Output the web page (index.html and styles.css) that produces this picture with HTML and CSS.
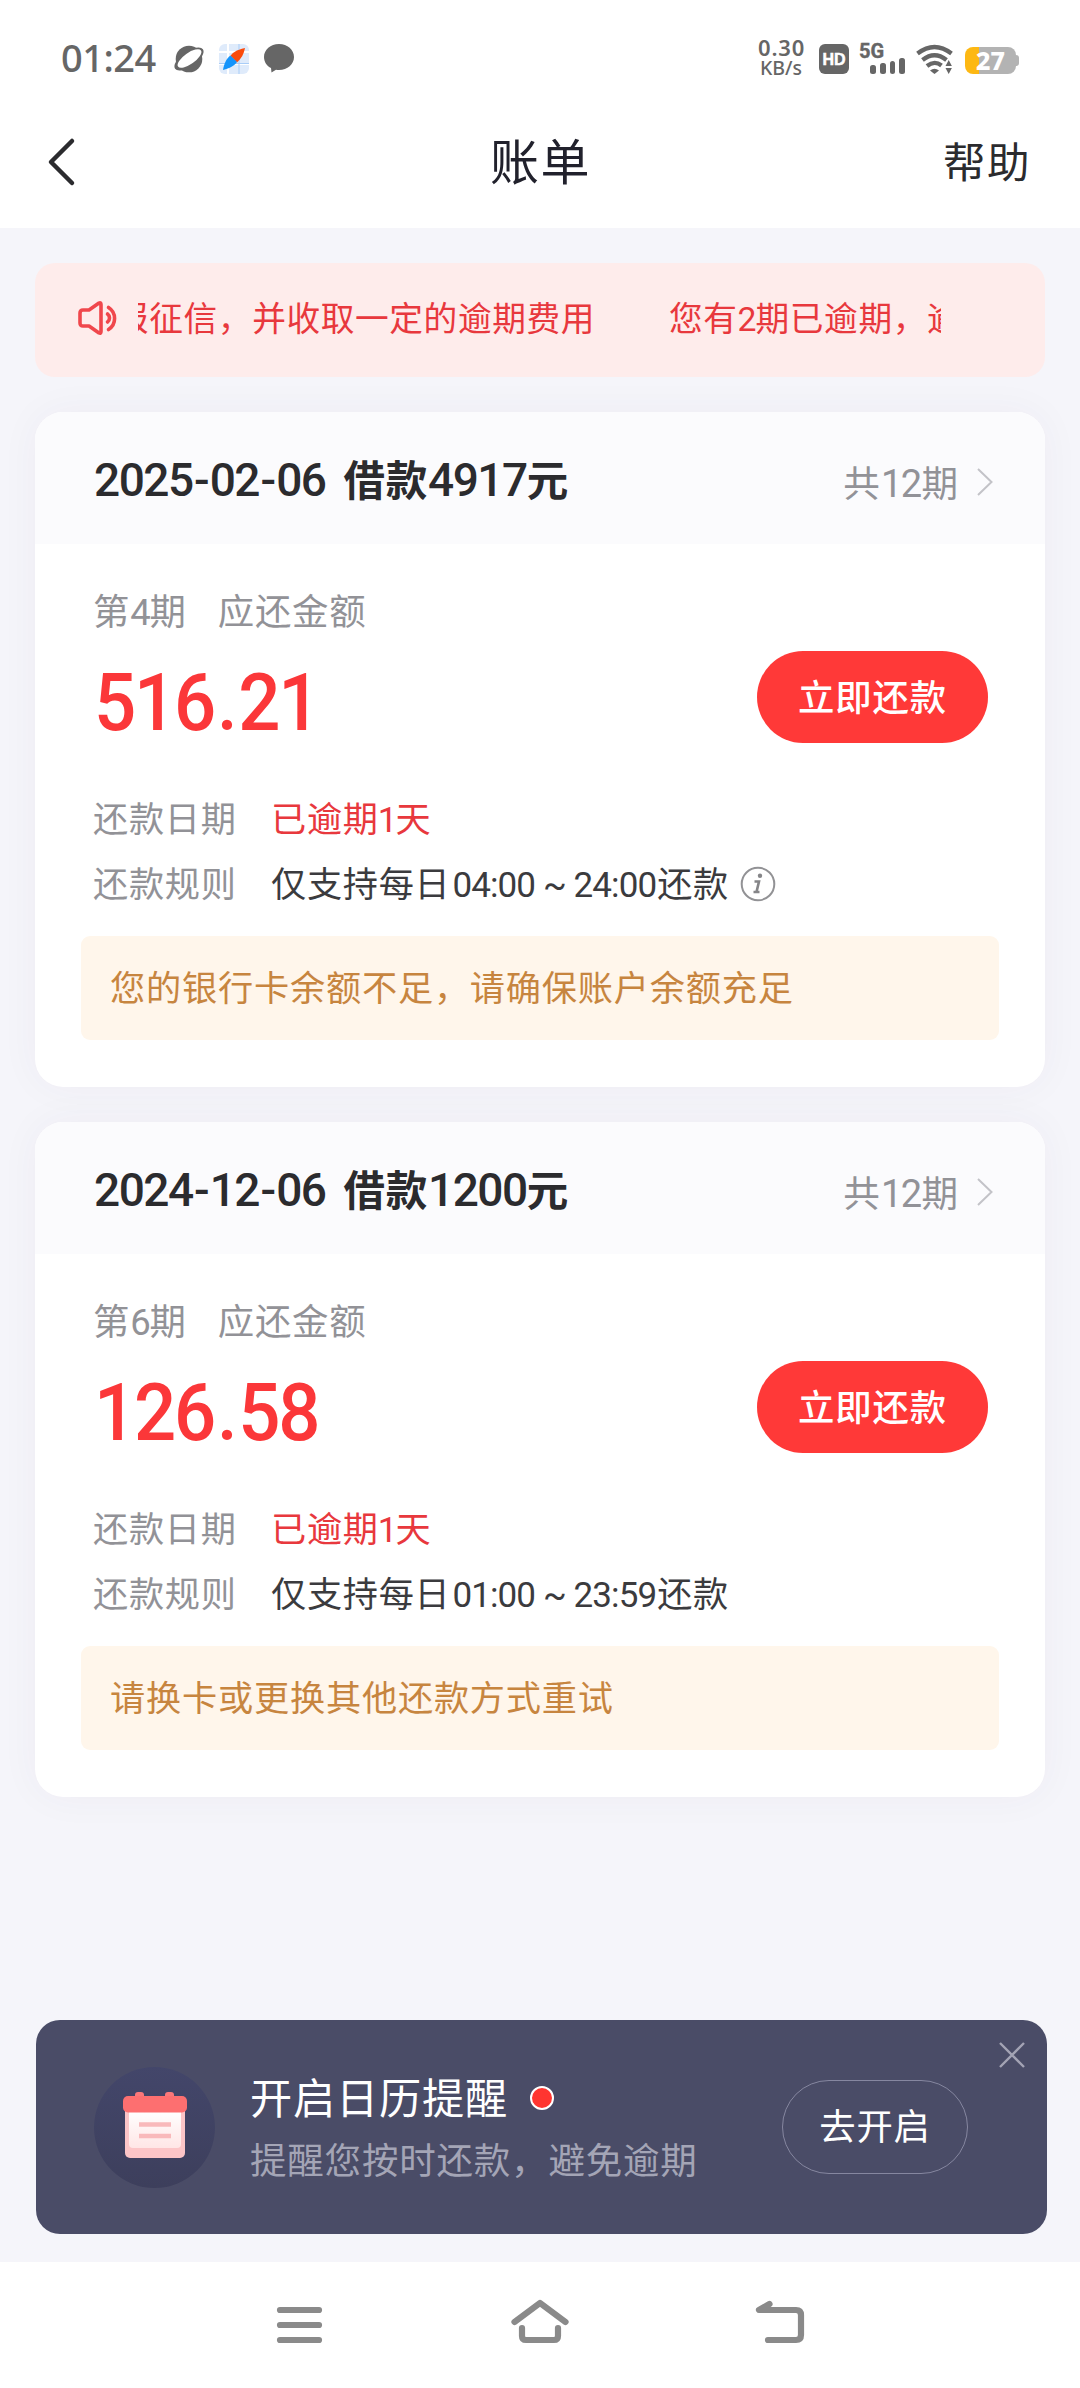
FILE: index.html
```html
<!DOCTYPE html>
<html lang="zh-CN">
<head>
<meta charset="utf-8">
<title>账单</title>
<link rel="stylesheet" href="styles.css">
</head>
<body>
<div class="status">
  <span class="time">01:24</span>
  <svg class="s-ico" width="30" height="30" viewBox="0 0 30 30"><circle cx="15" cy="15" r="13.300" fill="#666"/><ellipse cx="15" cy="15" rx="17" ry="7.500" transform="rotate(-35 15 15)" fill="#666"/><ellipse cx="15.500" cy="14.500" rx="14" ry="5.600" transform="rotate(-35 15.500 14.500)" fill="#fff"/></svg>
  <svg class="s-ico" width="30" height="30" viewBox="0 0 30 30"><rect width="30" height="30" rx="6" fill="#dfebfb"/><path d="M9 0v30M0 8h30M0 20h30" stroke="#fff" stroke-width="2"/><path d="M20 0v30M0 19.500h30" stroke="#a9cdf7" stroke-width="1"/><path d="M26 4C17 6 13 9 11.500 12l6.500 6.500C22 15 25 10 26 4Z" fill="#fa4b0c"/><path d="M4 26C5 19 8 14 11.500 11.500l6.500 6.500C15 22 11 24 4 26Z" fill="#1494fb"/></svg>
  <svg class="s-ico" width="30" height="30" viewBox="0 0 30 30"><path d="M15 0c8.500 0 15 5.700 15 13s-6.500 13-15 13c-1 0-2 0-3-.3L7.500 28.600 7 24C3 22 0 18 0 13 0 5.700 6.500 0 15 0Z" fill="#666"/></svg>
  <div class="speed"><span>0.30</span><small>KB/s</small></div>
  <span class="hd">HD</span>
  <div class="signal"><b>5G</b><i></i><i></i><i></i><i></i></div>
  <svg class="wifi" width="38" height="30" viewBox="0 0 38 30"><g fill="none" stroke="#666" stroke-width="4.300"><path d="M1.500 9.500Q18.500-3.500 35.500 9.500"/><path d="M6.500 16Q18.500 6.500 30.500 16"/><path d="M11 22Q18.500 16 25.500 21.500"/></g><path d="M14 26.500q4.500-3.500 9 0l-4.500 3.500Z" fill="#666"/><path d="M29.500 22l3.200-6 3.200 6ZM29.500 24h6.400l-3.200 6Z" fill="#666"/></svg>
  <div class="battery">27</div>
</div>
<header class="nav">
  <svg width="30" height="50" viewBox="0 0 30 50"><path d="M26 4 5 25 26 46" fill="none" stroke="#2b2b2e" stroke-width="4.500" stroke-linecap="round" stroke-linejoin="round"/></svg>
  <h1>账单</h1>
  <a class="help">帮助</a>
</header>
<main>
  <section class="alert">
    <svg width="42" height="36" viewBox="0 0 42 36" fill="none" stroke="#f0474c" stroke-width="3.600" stroke-linejoin="round" stroke-linecap="round"><path d="M5 10h6l10-7q2-1 2 1.500v27q0 2.500-2 1.500l-10-7H5q-3 0-3-3V13q0-3 3-3Z"/><path d="M30.500 7.500a13 13 0 0 1 0 22"/><path d="M29.500 14a5 5 0 0 1 0 8"/></svg>
    <div class="marquee"><div class="track"><span>报征信，并收取一定的逾期费用</span><span>您有<span class="n">2</span>期已逾期，逾</span></div></div>
  </section>

  <article class="card">
    <div class="card-head">
      <h2><span class="n">2025<i>-</i>02<i>-</i>06</span><span class="loan">借款<span class="n">4917</span>元</span></h2>
      <div class="terms">共<span class="n">12</span>期<svg width="18" height="30" viewBox="0 0 18 30"><path d="M2 2 15.500 15 2 28" fill="none" stroke="#c3c3c8" stroke-width="2"/></svg></div>
    </div>
    <div class="period"><span>第<span class="n">4</span>期</span><span>应还金额</span></div>
    <div class="pay"><strong class="n">516<i>.</i>21</strong><button>立即还款</button></div>
    <dl>
      <dt>还款日期</dt><dd class="late">已逾期<span class="n">1</span>天</dd>
      <dt>还款规则</dt><dd>仅支持每日<span class="n">04:00 ~ 24:00</span>还款<svg class="info" width="36" height="36" viewBox="0 0 36 36"><circle cx="18" cy="18" r="16.300" fill="none" stroke="#929295" stroke-width="2"/><circle cx="20" cy="9.800" r="2.200" fill="#858588"/><path d="M14.500 15.500h4.500l-2.500 10.500h3M13.500 26h6" fill="none" stroke="#858588" stroke-width="2.600"/></svg></dd>
    </dl>
    <p class="tip">您的银行卡余额不足，请确保账户余额充足</p>
  </article>

  <article class="card">
    <div class="card-head">
      <h2><span class="n">2024<i>-</i>12<i>-</i>06</span><span class="loan">借款<span class="n">1200</span>元</span></h2>
      <div class="terms">共<span class="n">12</span>期<svg width="18" height="30" viewBox="0 0 18 30"><path d="M2 2 15.500 15 2 28" fill="none" stroke="#c3c3c8" stroke-width="2"/></svg></div>
    </div>
    <div class="period"><span>第<span class="n">6</span>期</span><span>应还金额</span></div>
    <div class="pay"><strong class="n">126<i>.</i>58</strong><button>立即还款</button></div>
    <dl>
      <dt>还款日期</dt><dd class="late">已逾期<span class="n">1</span>天</dd>
      <dt>还款规则</dt><dd>仅支持每日<span class="n">01:00 ~ 23:59</span>还款</dd>
    </dl>
    <p class="tip">请换卡或更换其他还款方式重试</p>
  </article>

  <aside class="remind">
    <div class="disc">
      <svg width="66" height="68" viewBox="0 0 66 68"><defs><linearGradient id="sheet" x1="0" y1="0" x2="0" y2="1"><stop offset="0" stop-color="#fff"/><stop offset="1" stop-color="#ffe6e6"/></linearGradient></defs><rect x="3" y="10" width="60" height="57" rx="5" fill="#fcc5c7"/><path d="M7 20h52v33q0 4-4 4H11q-4 0-4-4Z" fill="url(#sheet)"/><rect x="13" y="1" width="9" height="10" rx="3" fill="#fb7779"/><rect x="43" y="1" width="9" height="10" rx="3" fill="#fb7779"/><rect x="1" y="5" width="64" height="16.500" rx="5" fill="#fd6f70"/><path d="M17 33.500h32M17 45h32" stroke="#f9b9bb" stroke-width="4.500"/></svg>
    </div>
    <div class="remind-text">
      <h3>开启日历提醒<i class="dot"></i></h3>
      <p>提醒您按时还款，避免逾期</p>
    </div>
    <a class="open">去开启</a>
    <svg class="close" width="28" height="28" viewBox="0 0 28 28"><path d="M2 2 26 26M26 2 2 26" stroke="#a3a3b4" stroke-width="2.400"/></svg>
  </aside>
</main>
<footer class="sysnav">
  <svg width="60" height="60" viewBox="0 0 60 60"><path d="M10 15h39M10 30h39M10 45h39"/></svg>
  <svg width="60" height="60" viewBox="0 0 60 60"><path d="M4.500 27 30 8 55.500 27M12 33v8q0 4 4 4h28q4 0 4-4v-8"/></svg>
  <svg width="60" height="60" viewBox="0 0 60 60"><path d="M19.500 9 9 15h37q5 0 5 5v20q0 5-5 5H18"/></svg>
</footer>
</body>
</html>
```

FILE: styles.css
```css
* { box-sizing: border-box; margin: 0; padding: 0; }
body {
  width: 1080px; height: 2388px; overflow: hidden;
  display: flex; flex-direction: column;
  background: #f5f5fa; color: #2b2b2e;
  font-family: "Noto Sans CJK SC", sans-serif;
}
.n { font-family: Roboto, sans-serif; }
i { font-style: normal; }
button { border: 0; font-family: inherit; }

.status {
  flex: none; height: 84px; padding: 34px 60px 0 61px; background: #fff; color: #666;
  display: flex; align-items: flex-start;
}
.time { width: 113px; margin-top: -2px; font: 500 38px/50px "Noto Sans", sans-serif; letter-spacing: -.5px; }
.s-ico { margin: 10px 15px 0 0; overflow: visible; }
.speed { margin-left: auto; width: 61px; display: flex; flex-direction: column; font-family: "Noto Sans", sans-serif; font-weight: 600; }
.speed span { font-size: 22px; line-height: 22px; letter-spacing: .8px; margin-top: 2px; }
.speed small { font-size: 19.500px; line-height: 19px; margin-left: 2px; font-weight: 500; }
.hd { margin-top: 10px; width: 30px; height: 30px; border-radius: 6px; background: #666; color: #fff; font: 700 16px/31px "Liberation Sans", sans-serif; text-align: center; -webkit-text-stroke: .5px #fff; }
.signal { position: relative; width: 46px; height: 30px; margin: 10px 0 0 10px; padding-left: 11px; display: flex; gap: 4px; align-items: flex-end; }
.signal b { position: absolute; left: 0; top: -3px; font: 700 20px/20px Roboto, sans-serif; -webkit-text-stroke: .4px #666; }
.signal i { width: 6px; height: 9px; border-radius: 2.500px; background: #666; }
.signal i:nth-of-type(2) { height: 11px; }
.signal i:nth-of-type(3) { height: 13px; }
.signal i:nth-of-type(4) { height: 16px; }
.wifi { margin: 10px 0 0 11px; }
.battery {
  position: relative; width: 51px; height: 27px; margin: 13px 4px 0 11px; border-radius: 8px;
  background: linear-gradient(90deg, #fdb813 14px, #b3b3b3 14px);
  color: #fff; font: 800 25px/27px "Noto Sans", sans-serif; text-align: center;
}
.battery::after { content: ""; position: absolute; right: -3px; top: 8px; width: 4px; height: 11px; border-radius: 0 3px 3px 0; background: #b3b3b3; }

.nav {
  flex: none; height: 144px; padding: 0 50px; background: #fff;
  display: grid; grid-template-columns: 1fr auto 1fr; align-items: center;
}
.nav svg { margin: 12px 0 0 -4px; }
.nav h1 { padding-left: 1px; font-size: 49px; font-weight: 400; line-height: 70px; letter-spacing: 1.500px; margin-top: 6px; color: #21212c; }
.help { justify-self: end; font-size: 42.500px; line-height: 60px; letter-spacing: 1.500px; margin: 8px -1px 0 0; }

main { flex: 1; padding: 35px 35px 0; display: flex; flex-direction: column; }
.alert {
  flex: none; height: 114px; border-radius: 20px; background: #feeceb; color: #e8383d;
  display: flex; align-items: center; padding-left: 43px; gap: 18px;
}
.alert svg { flex: none; margin-top: -5px; }
.marquee { width: 803px; overflow: hidden; }
.track { display: flex; gap: 74px; margin: -3px 0 0 -23px; width: max-content; font-size: 33.700px; letter-spacing: .6px; line-height: 54px; white-space: nowrap; }
.marquee .n { letter-spacing: -1px; }

.card {
  flex: none; height: 675px; margin-top: 35px; border-radius: 28px; overflow: hidden;
  background: #fff; box-shadow: 0 0 40px rgba(60, 50, 90, .045);
}
.card-head {
  height: 132px; padding: 0 51px 0 59px; background: #fbfbfd;
  display: flex; align-items: center; justify-content: space-between;
}
.card-head h2 { display: flex; align-items: baseline; gap: 18px; font-size: 41.500px; font-weight: 700; letter-spacing: .8px; line-height: 60px; margin-top: 2px; white-space: nowrap; }
.card-head h2 .n { font-size: 46px; font-weight: 500; letter-spacing: -1.500px; }
.card-head h2 i { margin: 0 1.500px; }
.terms { display: flex; align-items: baseline; font-size: 36.600px; line-height: 54px; margin-top: 10px; color: #929297; }
.terms .n { font-size: 38px; letter-spacing: -1.600px; margin: 0 1px; }
.terms svg { margin-left: 18px; }

.period { height: 44px; margin: 43px 0 0 58px; display: flex; gap: 31px; font-size: 36.400px; letter-spacing: .8px; line-height: 44px; color: #929297; }
.period .n { font-size: 36.500px; letter-spacing: -1.200px; }
.pay { height: 92px; margin-top: 20px; padding: 0 57px 0 59px; display: flex; justify-content: space-between; align-items: center; }
.pay strong { font-size: 79px; font-weight: 500; letter-spacing: -2.300px; line-height: 92px; color: #fb3739; margin-top: 11px; transform: scaleX(.94); transform-origin: left; }
.pay i { margin: 0 3px; }
.pay button { width: 231px; height: 92px; border-radius: 46px; background: #ff3938; color: #fff; font-size: 36.400px; font-weight: 500; letter-spacing: .8px; line-height: 84px; padding-bottom: 4px; }

dl { margin: 41px 0 0 58px; display: grid; grid-template-columns: 178px auto; grid-auto-rows: 65px; line-height: 65px; font-size: 35.200px; letter-spacing: .7px; }
dt { color: #929297; }
dd { color: #3b3b3e; white-space: pre; }
dd .n { font-size: 35px; letter-spacing: -.9px; margin: 0 1px 0 2px; }
.late { color: #e8383d; }
.late .n { margin: 0 -1px; }
.info { margin-left: 11px; vertical-align: -5px; }
.tip { height: 104px; margin: 22px 46px 0; padding-left: 29px; border-radius: 9px; background: #fff6eb; color: #c7853f; font-size: 35.200px; letter-spacing: .8px; line-height: 99px; }

.remind {
  position: relative; flex: none; width: 1011px; height: 214px; margin: auto 0 28px 1px; padding: 0 79px 0 58px;
  border-radius: 24px; background: #4a4c67; color: #fff; display: flex; align-items: center;
}
.disc { width: 121px; height: 121px; border-radius: 50%; background: linear-gradient(#43466a, #3d3f5c); display: flex; align-items: center; justify-content: center; }
.disc svg { margin-top: -4px; }
.remind-text { margin-left: 35px; }
.remind h3 { display: flex; align-items: center; font-size: 42.200px; letter-spacing: .8px; font-weight: 400; line-height: 62px; margin-top: -1px; }
.dot { width: 24px; height: 24px; margin: 3px 0 0 22px; border: 2px solid #fff; border-radius: 50%; background: #ff3530; }
.remind p { font-size: 36.500px; letter-spacing: .8px; line-height: 58px; margin-top: 3px; color: #a4a5b6; }
.open { margin-left: auto; width: 186px; height: 94px; border: 1px solid #8687a0; border-radius: 47px; text-align: center; font-size: 36.400px; letter-spacing: .8px; line-height: 87px; }
.close { position: absolute; right: 21px; top: 21px; }

.sysnav { flex: none; height: 126px; background: #fff; display: flex; justify-content: center; gap: 180px; padding-top: 33px; }
.sysnav svg { fill: none; stroke: #8a8a8a; stroke-width: 6.200; stroke-linecap: round; stroke-linejoin: round; }
```
